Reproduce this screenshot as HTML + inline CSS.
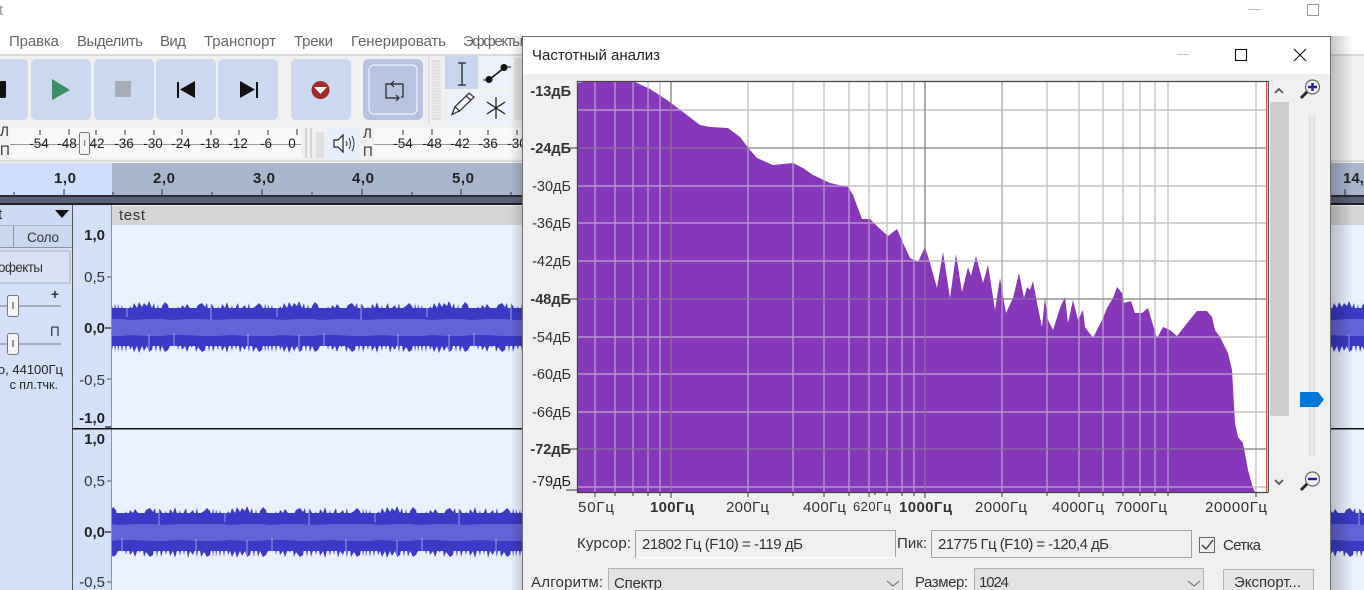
<!DOCTYPE html>
<html lang="ru"><head><meta charset="utf-8"><title>Частотный анализ</title>
<style>
html,body{margin:0;padding:0;background:#fff;overflow:hidden;width:1364px;height:590px}
svg{display:block}
text{font-family:"Liberation Sans",sans-serif;font-size:15px;fill:#222}
.m{fill:#666;font-size:15px}
.b{font-weight:bold}
.s{font-size:13.500px;fill:#333}
.mt{font-size:13.500px;fill:#222;text-anchor:middle}
.db{font-size:14.500px;fill:#333;text-anchor:end}
.hz{font-size:15px;fill:#333}
</style></head><body>
<svg width="1364" height="590" viewBox="0 0 1364 590" xmlns="http://www.w3.org/2000/svg">
<defs>
<pattern id="w1" patternUnits="userSpaceOnUse" x="112" y="300" width="150" height="56">
<rect x="0" y="8" width="150" height="38" fill="#3a3ac6"/>
<path fill="#3a3ac6" d="M0,6 2,12 3,3 5,14 6,4 8,12 10,5 12,16 14,8 16,14 18,6 20,9 22,3 25,8 27,2 30,7 32,3 35,6 37,1 40,8 42,3 44,15 46,4 48,16 50,6 53,2 56,5 58,14 60,17 62,10 64,14 66,6 68,12 70,5 73,8 75,4 78,8 80,12 82,17 84,9 86,5 90,3 93,7 95,3 97,17 99,3 101,6 104,12 106,6 108,14 110,4 113,8 115,2 118,12 120,5 122,16 124,7 126,3 128,14 130,8 133,5 135,11 137,3 139,16 141,8 144,6 147,3 150,6 150,50 147,52 144,47 141,52 139,38 137,52 135,44 133,50 130,46 128,53 126,40 124,50 122,38 120,51 118,42 115,53 113,46 110,51 108,40 106,50 104,42 101,52 99,37 97,52 95,38 93,50 90,52 86,47 84,52 82,38 80,48 78,44 75,52 73,46 70,50 68,40 66,50 64,38 62,48 60,36 58,46 56,50 53,52 50,46 48,52 46,38 44,52 42,40 40,50 37,52 35,46 32,51 30,46 27,53 25,46 22,52 20,46 18,50 16,38 14,52 12,38 10,52 8,40 6,52 5,38 3,52 2,40 0,50Z"/>
<path fill="#6363d8" d="M0,19 10,19 20,20 35,19 50,19 60,20 75,19 90,19 105,20 120,19 135,19 150,19 150,36 135,36 120,35 105,36 90,36 75,35 60,35 50,36 35,36 20,35 10,36 0,36Z"/>
<path d="M99,3v17M62,33v20M37,35v16M136,34v18M15,3v14" stroke="#e9f1fe" stroke-width=".8" opacity=".7"/>
</pattern>
<pattern id="w2" href="#w1" x="60" y="505"/>
<linearGradient id="sh" x1="0" x2="1"><stop offset="0" stop-color="#000" stop-opacity=".22"/><stop offset="1" stop-color="#000" stop-opacity="0"/></linearGradient>
<linearGradient id="shl" x1="1" x2="0"><stop offset="0" stop-color="#000" stop-opacity=".14"/><stop offset="1" stop-color="#000" stop-opacity="0"/></linearGradient>
</defs>

<!-- window -->
<rect width="1364" height="590" fill="#fff"/>
<text x="-1" y="15" style="fill:#999">t</text>
<rect x="1249" y="9" width="12" height="1" fill="#bbb"/>
<rect x="1307.500" y="4.500" width="11" height="11" fill="none" stroke="#999"/>
<text class="m" x="9" y="46" textLength="50">Правка</text>
<text class="m" x="77" y="46" textLength="66">Выделить</text>
<text class="m" x="160" y="46" textLength="26">Вид</text>
<text class="m" x="204" y="46" textLength="72">Транспорт</text>
<text class="m" x="294" y="46" textLength="39">Треки</text>
<text class="m" x="351" y="46" textLength="95">Генерировать</text>
<text class="m" x="463" y="46" textLength="60">Эффекты</text>

<!-- toolbar -->
<rect x="0" y="54" width="1364" height="72" fill="#f0f0f0"/>
<rect x="0" y="54" width="1364" height="2" fill="#d9d9d9"/>
<g fill="#ccd8f0">
<rect x="-30" y="59" width="58" height="61" rx="5"/>
<rect x="31" y="59" width="60" height="61" rx="5"/>
<rect x="94" y="59" width="60" height="61" rx="5"/>
<rect x="156" y="59" width="60" height="61" rx="5"/>
<rect x="218" y="59" width="60" height="61" rx="5"/>
<rect x="291" y="59" width="60" height="61" rx="5"/>
</g>
<rect x="0" y="81" width="6" height="17" rx="1" fill="#111"/>
<path d="M52,79 70,90 52,100Z" fill="#3e8d66"/>
<rect x="115" y="81" width="16" height="16" fill="#a9adb8"/>
<path d="M177,82h2v16h-2zM195,81v17l-15,-8.500z" fill="#111"/>
<path d="M256,82h2v16h-2zM240,81v17l15,-8.500z" fill="#111"/>
<circle cx="320.500" cy="90" r="9" fill="#a32a2a"/>
<path d="M314,87h13l-6.500,7z" fill="#fff"/>
<rect x="363" y="59" width="60" height="61" rx="6" fill="#b8c3e2"/>
<rect x="369" y="65" width="48" height="49" rx="5" fill="none" stroke="#eef1fb" stroke-width="1.200"/>
<path d="M391,84H386V98H399M396,95l3,3 -3,3M394,81l-3,3 3,3M391,84H403V97H401" fill="none" stroke="#222" stroke-width="1.200"/>
<rect x="428" y="56" width="1.500" height="68" fill="#dcdcdc"/>
<rect x="432" y="60" width="9" height="60" fill="#dedede"/>
<g stroke="#f2f2f2" stroke-width="1"><path d="M432,63h9M432,66h9M432,69h9M432,72h9M432,75h9M432,78h9M432,81h9M432,84h9M432,87h9M432,90h9M432,93h9M432,96h9M432,99h9M432,102h9M432,105h9M432,108h9M432,111h9M432,114h9M432,117h9"/></g>
<rect x="445" y="56" width="33" height="33" fill="#c8d5ee"/>
<rect x="480" y="56" width="33" height="33" fill="#ebf0fb"/>
<rect x="445" y="92" width="33" height="32" fill="#ebf0fb"/>
<rect x="480" y="92" width="33" height="32" fill="#ebf0fb"/>
<path d="M458,63h8M462,63v22M458,85h8" stroke="#222" stroke-width="1.300" fill="none"/>
<path d="M490,79 504,68" stroke="#111" stroke-width="1.500"/><circle cx="489" cy="79.500" r="3.500" fill="#111"/><circle cx="504" cy="67.500" r="3.500" fill="#111"/><path d="M483,80h5M505,67h6" stroke="#111" stroke-width="1"/>
<path d="M453,116l3,-8 14,-14 5,4 -14,14zM456,108l5,5M467,97l5,4" fill="#f7f7f7" stroke="#333" stroke-width="1.300" transform="translate(-1,2) scale(1,.97)"/>
<path d="M496,97v22M487,102l18,12M505,102l-18,12" stroke="#222" stroke-width="1.300"/>
<rect x="514" y="58" width="8" height="62" fill="#e0e0e0"/>

<!-- meters -->
<rect x="0" y="126" width="1364" height="37" fill="#f0f0f0"/>
<rect x="0" y="160" width="1364" height="2" fill="#dcdcdc"/>
<rect x="10" y="128" width="291" height="30" fill="#f8f8f8"/>
<rect x="10" y="144" width="291" height="1" fill="#999"/>
<text class="s" x="0" y="136">Л</text><text class="s" x="0" y="155">П</text>
<g stroke="#333"><path d="M40,130v5M69,129v6M96,130v5M125,130v5M154,130v5M182,129v6M211,130v5M239,130v5M268,130v5M297,129v6"/></g>
<text class="mt" x="39" y="148">-54</text><text class="mt" x="67" y="148">-48</text><text class="mt" x="97" y="148">42</text><text class="mt" x="124" y="148">-36</text><text class="mt" x="153" y="148">-30</text><text class="mt" x="181" y="148">-24</text><text class="mt" x="210" y="148">-18</text><text class="mt" x="238" y="148">-12</text><text class="mt" x="266" y="148">-6</text><text class="mt" x="292" y="148">0</text>
<rect x="79.500" y="132.500" width="10" height="22" rx="2" fill="#f4f4f4" stroke="#777"/>
<rect x="84" y="140" width="1.200" height="6" fill="#888"/>
<rect x="305" y="128" width="2" height="30" fill="#d4d4d4"/><rect x="310" y="128" width="2" height="30" fill="#d4d4d4"/>
<rect x="316" y="132" width="8" height="26" fill="#e0e0e0"/>
<rect x="326" y="128" width="33" height="32" fill="#e8eefa"/>
<path d="M334,140h4l5,-5v17l-5,-5h-4z" fill="#fafafa" stroke="#222" stroke-width="1.200"/>
<path d="M346,141q2,3 0,5M349,138q3,6 0,11M352,136q4,8 0,15" fill="none" stroke="#333"/>
<text class="s" x="363" y="138">Л</text><text class="s" x="363" y="156">П</text>
<rect x="374" y="128" width="150" height="30" fill="#f8f8f8"/>
<rect x="374" y="144" width="150" height="1" fill="#999"/>
<g stroke="#333"><path d="M403,130v5M432,129v6M460,130v5M488,130v5M517,130v5"/></g>
<text class="mt" x="403" y="148">-54</text><text class="mt" x="432" y="148">-48</text><text class="mt" x="460" y="148">-42</text><text class="mt" x="488" y="148">-36</text><text class="mt" x="517" y="148">-30</text>

<!-- timeline -->
<rect x="0" y="163" width="113" height="32" fill="#cfdefc"/>
<rect x="112" y="163" width="1252" height="32" fill="#a9b5cd"/>
<text class="b" x="54" y="183" textLength="22">1,0</text>
<text class="b" x="153" y="183" textLength="22">2,0</text>
<text class="b" x="253" y="183" textLength="22">3,0</text>
<text class="b" x="352" y="183" textLength="22">4,0</text>
<text class="b" x="452" y="183" textLength="22">5,0</text>
<text class="b" x="1343" y="183">14,0</text>
<g stroke="#333"><path d="M14,192v3M64,189v6M113,192v3M162,189v6M212,192v3M262,189v6M312,192v3M362,189v6M412,192v3M461,189v6M511,192v3M1345,189v6"/></g>
<rect x="0" y="195" width="1364" height="2" fill="#2c2c34"/>
<rect x="0" y="197" width="1364" height="6" fill="#5a6078"/>
<rect x="0" y="203" width="1364" height="2" fill="#1e1e24"/>

<!-- track -->
<rect x="0" y="205" width="72" height="385" fill="#d3e0f8"/>
<rect x="73" y="205" width="39" height="385" fill="#d3e0f8"/>
<rect x="112" y="225" width="1252" height="365" fill="#e9f1fe"/>
<rect x="112" y="205" width="1252" height="20" fill="#d4d4d4"/>
<rect x="112" y="205" width="1252" height="1" fill="#f2f2f2"/>
<text x="119" y="220" textLength="26" style="fill:#333">test</text>
<rect x="0" y="205" width="72" height="21" fill="#cbd9f2"/>
<text x="-2" y="219">t</text>
<path d="M55,210h14l-7,8z" fill="#111"/>
<rect x="0" y="225.500" width="72" height="1" fill="#8a93a6"/>
<rect x="0" y="226" width="72" height="22" fill="#cad7ef"/>
<rect x="13" y="226" width="1" height="22" fill="#8a93a6"/>
<rect x="0" y="247" width="72" height="1" fill="#8a93a6"/>
<text class="s" x="27" y="242" textLength="32">Соло</text>
<rect x="-2" y="251" width="72" height="32" fill="#d9e2f3" stroke="#a9b0bd"/>
<text class="s" x="-2" y="272" textLength="45">офекты</text>
<path d="M0,306h61M0,344h61" stroke="#777"/>
<text class="s b" x="51" y="299">+</text>
<text class="s" x="50" y="336">П</text>
<g fill="#f5f5f5" stroke="#777"><rect x="7.500" y="295.500" width="11" height="21" rx="2"/><rect x="7.500" y="333.500" width="11" height="21" rx="2"/></g>
<path d="M13,302v7M13,340v7" stroke="#777" stroke-width="1.500"/>
<text x="63" y="374" style="text-anchor:end;font-size:13px;fill:#222">о, 44100Гц</text>
<text x="58" y="389" style="text-anchor:end;font-size:12.500px;fill:#222">с пл.тчк.</text>
<rect x="72" y="205" width="1" height="385" fill="#555"/>
<rect x="111" y="205" width="1" height="385" fill="#8d949f"/>

<rect x="112" y="300" width="410" height="54" fill="url(#w1)"/>
<rect x="1331" y="300" width="33" height="54" fill="url(#w1)"/>
<rect x="112" y="505" width="410" height="54" fill="url(#w2)"/>
<rect x="1331" y="505" width="33" height="54" fill="url(#w2)"/>
<rect x="72" y="428" width="1292" height="1.500" fill="#111"/>

<text class="b" x="105" y="240" style="text-anchor:end">1,0</text>
<text x="105" y="282" style="text-anchor:end;fill:#333">0,5</text>
<text class="b" x="105" y="333" style="text-anchor:end">0,0</text>
<text x="105" y="385" style="text-anchor:end;fill:#333">-0,5</text>
<text class="b" x="105" y="423" style="text-anchor:end">-1,0</text>
<text class="b" x="105" y="444" style="text-anchor:end">1,0</text>
<text x="105" y="486" style="text-anchor:end;fill:#333">0,5</text>
<text class="b" x="105" y="537" style="text-anchor:end">0,0</text>
<text x="105" y="587" style="text-anchor:end;fill:#333">-0,5</text>
<path d="M107,277h4M107,379h4M107,481h4M107,582h4" stroke="#555"/>
<path d="M105,328h6M105,532h6M105,427h6" stroke="#222" stroke-width="1.300"/>

<!-- dialog shadow -->
<rect x="1331" y="36" width="22" height="554" fill="url(#sh)"/>
<rect x="510" y="36" width="12" height="554" fill="url(#shl)"/>

<!-- dialog -->
<rect x="522" y="36" width="809" height="554" fill="#f0f0f0"/>
<rect x="522.500" y="36.500" width="808" height="560" fill="none" stroke="#6e6e6e"/>
<rect x="523" y="37" width="807" height="37" fill="#fff"/>
<text x="532" y="60" textLength="128" style="fill:#222">Частотный анализ</text>
<rect x="1177" y="54" width="12" height="1" fill="#c8c8c8"/>
<rect x="1235.500" y="49.500" width="11" height="11" fill="none" stroke="#111" stroke-width="1.100"/>
<path d="M1294,49 1306,61M1306,49 1294,61" stroke="#111" stroke-width="1.100"/>

<!-- plot -->
<rect x="578" y="81" width="690" height="411" fill="#fff"/>
<g stroke="#c4c4c4" stroke-width="1.400">
<path d="M578,110h690M578,186h690M578,223h690M578,261h690M578,337h690M578,374h690M578,412h690M578,487h690"/>
<path d="M595,81v411M615,81v411M633,81v411M648,81v411M660,81v411M748,81v411M793,81v411M824,81v411M849,81v411M869,81v411M887,81v411M902,81v411M914,81v411M1047,81v411M1079,81v411M1103,81v411M1123,81v411M1140,81v411M1155,81v411M1168,81v411M1256,81v411"/>
</g>
<g stroke="#aaa" stroke-width="1.400"><path d="M1002,81v411"/></g>
<g stroke="#808080" stroke-width="1.300"><path d="M578,148h690M578,299h690M578,449h690M671,81v411M925,81v411"/></g>
<path fill="#8738ba" d="M578,492V83L583,82 633,81 650,89 667,100 683,112 700,125 710,127 728,128 740,137 750,150 757,158 773,165 793,163 803,168 813,175 830,183 848,187 853,195 862,219 870,219 878,227 888,236 897,229 903,243 910,258 918,262 925,247 930,263 937,288 943,252 950,298 956,254 962,292 968,267 971,276 976,256 983,283 988,265 995,310 1000,278 1006,313 1013,298 1019,273 1024,298 1027,287 1030,290 1033,281 1037,303 1042,327 1045,298 1048,320 1053,330 1060,308 1065,297 1068,323 1073,300 1078,320 1083,310 1085,327 1093,338 1103,318 1107,308 1113,298 1117,287 1122,293 1124,303 1131,301 1135,313 1142,313 1148,308 1153,325 1157,338 1163,327 1170,330 1177,336 1188,322 1197,311 1207,311 1212,317 1215,330 1220,337 1228,353 1232,370 1235,423 1238,437 1243,443 1248,470 1253,488 1255,492Z"/>
<clipPath id="sp"><path d="M578,492V83L583,82 633,81 650,89 667,100 683,112 700,125 710,127 728,128 740,137 750,150 757,158 773,165 793,163 803,168 813,175 830,183 848,187 853,195 862,219 870,219 878,227 888,236 897,229 903,243 910,258 918,262 925,247 930,263 937,288 943,252 950,298 956,254 962,292 968,267 971,276 976,256 983,283 988,265 995,310 1000,278 1006,313 1013,298 1019,273 1024,298 1027,287 1030,290 1033,281 1037,303 1042,327 1045,298 1048,320 1053,330 1060,308 1065,297 1068,323 1073,300 1078,320 1083,310 1085,327 1093,338 1103,318 1107,308 1113,298 1117,287 1122,293 1124,303 1131,301 1135,313 1142,313 1148,308 1153,325 1157,338 1163,327 1170,330 1177,336 1188,322 1197,311 1207,311 1212,317 1215,330 1220,337 1228,353 1232,370 1235,423 1238,437 1243,443 1248,470 1253,488 1255,492Z"/></clipPath>
<g clip-path="url(#sp)">
<g stroke="#b593cf" stroke-width="1.400">
<path d="M578,110h690M578,186h690M578,223h690M578,261h690M578,337h690M578,374h690M578,412h690M578,487h690"/>
<path d="M595,81v411M615,81v411M633,81v411M648,81v411M660,81v411M748,81v411M793,81v411M824,81v411M849,81v411M869,81v411M887,81v411M902,81v411M914,81v411M1002,81v411M1047,81v411M1079,81v411M1103,81v411M1123,81v411M1140,81v411M1155,81v411M1168,81v411"/>
</g>
<g stroke="#8b6fa0" stroke-width="1.300"><path d="M578,148h690M578,299h690M578,449h690M671,81v411M925,81v411"/></g>
</g>
<rect x="1266" y="81" width="1" height="411" fill="#e8504a"/>
<rect x="1267" y="81" width="1" height="411" fill="#f0c8c8"/>
<rect x="1268" y="81" width="1" height="411" fill="#555"/>
<path d="M577.500,81V492.500H1268.500M577.500,81.500H1268" fill="none" stroke="#444" stroke-width="1.300"/>
<path d="M570,148h8M570,299h8M570,449h8M566,490h12" stroke="#333"/>
<path d="M595,492v5M615,492v4M633,492v4M648,492v4M660,492v4M671,492v6M748,492v5M793,492v4M824,492v5M849,492v4M869,492v5M875,492v3M887,492v4M902,492v4M914,492v4M925,492v6M1002,492v5M1047,492v4M1079,492v5M1103,492v4M1123,492v4M1140,492v4M1155,492v4M1168,492v4M1256,492v5" stroke="#333"/>

<text class="db b" x="571" y="96">-13дБ</text>
<text class="db b" x="571" y="153">-24дБ</text>
<text class="db" x="571" y="191">-30дБ</text>
<text class="db" x="571" y="228">-36дБ</text>
<text class="db" x="571" y="266">-42дБ</text>
<text class="db b" x="571" y="304">-48дБ</text>
<text class="db" x="571" y="342">-54дБ</text>
<text class="db" x="571" y="379">-60дБ</text>
<text class="db" x="571" y="417">-66дБ</text>
<text class="db b" x="571" y="454">-72дБ</text>
<text class="db" x="571" y="486" style="fill:#222">-79дБ</text>

<text class="hz" x="578" y="512" textLength="36">50Гц</text>
<text class="hz b" x="650" y="512" textLength="44">100Гц</text>
<text class="hz" x="726" y="512" textLength="43">200Гц</text>
<text class="hz" x="803" y="512" textLength="43">400Гц</text>
<text class="hz" x="853" y="511" textLength="38" style="font-size:13px">620Гц</text>
<text class="hz b" x="899" y="512" textLength="53">1000Гц</text>
<text class="hz" x="975" y="512" textLength="52">2000Гц</text>
<text class="hz" x="1052" y="512" textLength="52">4000Гц</text>
<text class="hz" x="1115" y="512" textLength="52">7000Гц</text>
<text class="hz" x="1205" y="512" textLength="62">20000Гц</text>

<!-- scroll + zoom -->
<path d="M1275,93l4,-4 4,4" fill="none" stroke="#555" stroke-width="1.800"/>
<rect x="1270" y="102" width="19" height="314" fill="#cdcdcd"/>
<path d="M1275,480l4,4 4,-4" fill="none" stroke="#555" stroke-width="1.800"/>
<rect x="1309.500" y="116.500" width="5" height="339" fill="#e8e8e8" stroke="#dadada"/>
<path d="M1300,392h18l6,7.500 -6,7.500h-18z" fill="#0078d7"/>
<path d="M1301,98l7,-7" stroke="#222" stroke-width="2.800"/>
<circle cx="1312.500" cy="87" r="7" fill="#f2f2fa" stroke="#666" stroke-width="1.200"/>
<path d="M1308,87h9M1312.500,83v8" stroke="#22229a" stroke-width="2.400"/>
<path d="M1301,490l7,-7" stroke="#222" stroke-width="2.800"/>
<circle cx="1312.500" cy="479" r="7" fill="#f2f2fa" stroke="#666" stroke-width="1.200"/>
<path d="M1308,479h9" stroke="#22229a" stroke-width="2.400"/>

<!-- bottom controls -->
<text x="577" y="548" textLength="54" style="fill:#333">Курсор:</text>
<rect x="635.500" y="530.500" width="260" height="27" fill="#f0f0f0" stroke="#a0a0a0"/>
<rect x="636" y="557" width="260" height="1" fill="#fff"/>
<text x="642" y="549" textLength="161" style="fill:#333">21802 Гц (F10) = -119 дБ</text>
<text x="897" y="548" textLength="30" style="fill:#333">Пик:</text>
<rect x="931.500" y="530.500" width="260" height="27" fill="#f0f0f0" stroke="#a0a0a0"/>
<text x="938" y="549" textLength="171" style="fill:#333">21775 Гц (F10) = -120,4 дБ</text>
<rect x="1199.500" y="537.500" width="15" height="15" fill="#f0f0f0" stroke="#666"/>
<path d="M1202,545l4,4 7,-9" fill="none" stroke="#333" stroke-width="1.300"/>
<text x="1223" y="550" textLength="38" style="fill:#333">Сетка</text>
<text x="531" y="587" textLength="72" style="fill:#333">Алгоритм:</text>
<rect x="608.500" y="568.500" width="294" height="30" fill="#e3e3e3" stroke="#b0b0b0"/>
<text x="614" y="588" textLength="48" style="fill:#333">Спектр</text>
<path d="M887,581l6,5 6,-5" fill="none" stroke="#666"/>
<text x="915" y="587" textLength="53" style="fill:#333">Размер:</text>
<rect x="974.500" y="568.500" width="229" height="30" fill="#e3e3e3" stroke="#b0b0b0"/>
<text x="979" y="587" textLength="30" style="fill:#333">1024</text>
<path d="M1188,581l6,5 6,-5" fill="none" stroke="#666"/>
<rect x="1223.500" y="569.500" width="90" height="30" fill="#e6e6e6" stroke="#b4b4b4"/>
<text x="1234" y="587" textLength="67" style="fill:#333">Экспорт...</text>
</svg>
</body></html>
